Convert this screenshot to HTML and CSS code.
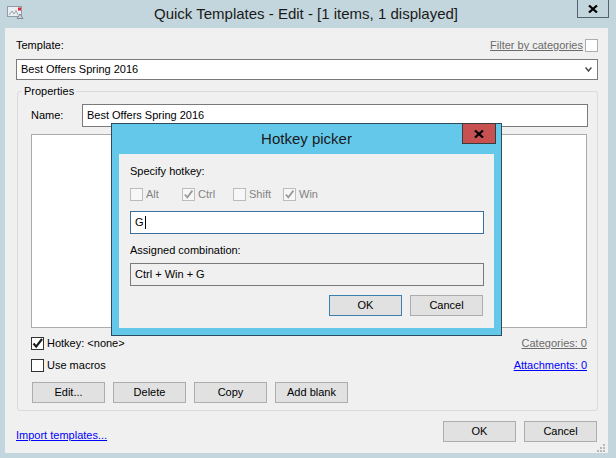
FILE: index.html
```html
<!DOCTYPE html>
<html>
<head>
<meta charset="utf-8">
<title>Quick Templates - Edit</title>
<link rel="stylesheet" href="styles.css">
</head>
<body>
<div class="window">
  <div class="titlebar">
    <svg class="appicon" width="17" height="13" viewBox="0 0 17 13">
      <rect x="0.5" y="0.5" width="14" height="10" fill="#e9eef1" stroke="#8f9ca6"/>
      <rect x="11" y="1.5" width="3" height="3" fill="#e3202b"/>
      <path d="M2 9 L5 5 L7 8 L9 4.5 L11 9" fill="none" stroke="#9aa5ad"/>
      <path d="M10 12.5 L13 8 L16 12.5 Z" fill="#cdd4d9" stroke="#7f8a92"/>
    </svg>
    <div class="title">Quick Templates - Edit - [1 items, 1 displayed]</div>
    <div class="closebtn">
      <svg width="10" height="8" viewBox="0 0 10 8"><path d="M1 0.5 L9 7.5 M9 0.5 L1 7.5" stroke="#000" stroke-width="2.2"/></svg>
    </div>
  </div>

  <div class="client">
    <div class="row-top">
      <span>Template:</span>
      <span class="filter"><span class="link-gray">Filter by categories</span><span class="cb cb-light"></span></span>
    </div>
    <div class="combo">
      <span>Best Offers Spring 2016</span>
      <svg width="7" height="5" viewBox="0 0 7 5"><path d="M0.6 0.6 L3.5 4 L6.4 0.6" fill="none" stroke="#4a4a4a" stroke-width="1.5"/></svg>
    </div>

    <div class="group">
      <span class="legend">Properties</span>
      <div class="name-row">
        <span class="name-label">Name:</span>
        <div class="textbox">Best Offers Spring 2016</div>
      </div>
      <div class="memo"></div>
      <div class="opt-row">
        <span class="check"><span class="cb"><svg width="11" height="11" viewBox="0 0 11 11"><path d="M1.5 5.5 L4.2 8.6 L10 1" fill="none" stroke="#1a1a1a" stroke-width="2.2"/></svg></span>Hotkey: &lt;none&gt;</span>
        <span class="link-gray">Categories: 0</span>
      </div>
      <div class="opt-row">
        <span class="check"><span class="cb"></span>Use macros</span>
        <span class="link-blue">Attachments: 0</span>
      </div>
      <div class="btn-row">
        <span class="btn">Edit...</span>
        <span class="btn">Delete</span>
        <span class="btn">Copy</span>
        <span class="btn">Add blank</span>
      </div>
    </div>

    <div class="bottom-row">
      <span class="link-blue">Import templates...</span>
      <div class="btn-pair">
        <span class="btn">OK</span>
        <span class="btn">Cancel</span>
      </div>
    </div>

    <svg class="gripper" width="9" height="9" viewBox="0 0 9 9">
      <rect x="7" y="1" width="2" height="2" fill="#b8b8b8"/>
      <rect x="4" y="4" width="2" height="2" fill="#b8b8b8"/>
      <rect x="7" y="4" width="2" height="2" fill="#b8b8b8"/>
      <rect x="1" y="7" width="2" height="2" fill="#b8b8b8"/>
      <rect x="4" y="7" width="2" height="2" fill="#b8b8b8"/>
      <rect x="7" y="7" width="2" height="2" fill="#b8b8b8"/>
    </svg>
  </div>

  <div class="picker">
    <div class="p-titlebar">
      <span></span>
      <div class="p-title">Hotkey picker</div>
      <div class="p-close">
        <svg width="10" height="8" viewBox="0 0 10 8"><path d="M1 0.5 L9 7.5 M9 0.5 L1 7.5" stroke="#000" stroke-width="2.2"/></svg>
      </div>
    </div>
    <div class="p-client">
      <div class="p-line">Specify hotkey:</div>
      <div class="p-checks">
        <span class="check dis"><span class="cb"></span>Alt</span>
        <span class="check dis"><span class="cb"><svg width="11" height="11" viewBox="0 0 11 11"><path d="M1.8 5.5 L4.3 8.4 L9.4 1.6" fill="none" stroke="#9a9a9a" stroke-width="1.8"/></svg></span>Ctrl</span>
        <span class="check dis"><span class="cb"></span>Shift</span>
        <span class="check dis"><span class="cb"><svg width="11" height="11" viewBox="0 0 11 11"><path d="M1.8 5.5 L4.3 8.4 L9.4 1.6" fill="none" stroke="#9a9a9a" stroke-width="1.8"/></svg></span>Win</span>
      </div>
      <div class="p-input">G<span class="caret"></span></div>
      <div class="p-line p-gap">Assigned combination:</div>
      <div class="p-readonly">Ctrl + Win + G</div>
      <div class="p-buttons">
        <span class="btn btn-default">OK</span>
        <span class="btn">Cancel</span>
      </div>
    </div>
  </div>
</div>
</body>
</html>
```
FILE: styles.css
```css
* { box-sizing: border-box; }
html, body { margin: 0; padding: 0; }
body {
  width: 616px;
  height: 458px;
  overflow: hidden;
  font-family: "Liberation Sans", Arial, sans-serif;
  font-size: 11px;
  line-height: 13px;
  color: #000;
}
.window {
  position: relative;
  width: 616px;
  height: 458px;
  background: #c3d6dd;
}

/* main title bar */
.titlebar {
  height: 28px;
  display: grid;
  grid-template-columns: 1fr auto 1fr;
  align-items: start;
}
.appicon { margin: 6px 0 0 7px; }
.title {
  font-size: 15px;
  line-height: 18px;
  padding-top: 5px;
  padding-right: 4px;
  color: #1a1a1a;
  white-space: nowrap;
}
.closebtn {
  justify-self: end;
  width: 32px;
  height: 18px;
  margin-right: 7px;
  border: 1px solid #56626b;
  border-top: none;
  display: flex;
  align-items: center;
  justify-content: center;
  padding-top: 1px;
}

/* main client area */
.client {
  position: relative;
  margin-left: 5px;
  width: 603px;
  height: 425px;
  background: #f0f0f0;
  padding: 11px 10px 0 11px;
  display: flex;
  flex-direction: column;
}
.row-top {
  height: 13px;
  display: flex;
  justify-content: space-between;
  align-items: center;
}
.filter { display: flex; align-items: center; gap: 2px; }
.link-gray { color: #6b6b6b; text-decoration: underline; }
.link-blue { color: #0000ff; text-decoration: underline; }

.cb {
  flex: none;
  width: 13px;
  height: 13px;
  border: 1px solid #333;
  background: #fff;
  display: inline-flex;
  align-items: center;
  justify-content: center;
}
.cb-light { border-color: #adadad; }

.combo {
  margin-top: 7px;
  height: 21px;
  border: 1px solid #7a7a7a;
  background: #fff;
  display: flex;
  align-items: center;
  justify-content: space-between;
  padding: 0 5px 0 4px;
}

/* group box */
.group {
  position: relative;
  margin: 11px 0 0 1px;
  border: 1px solid #dadada;
  border-radius: 3px;
  padding: 12px 9px 7px 13px;
}
.legend {
  position: absolute;
  top: -7px;
  left: 4px;
  padding: 0 2px;
  background: #f0f0f0;
}
.name-row { display: flex; height: 23px; align-items: center; }
.name-label { width: 51px; flex: none; }
.textbox {
  flex: 1;
  height: 23px;
  border: 1px solid #7a7a7a;
  background: #fff;
  padding: 0 4px;
  display: flex;
  align-items: center;
}
.memo {
  margin: 7px 1px 0 0;
  height: 194px;
  border: 1px solid #ababab;
  background: #fff;
}
.opt-row {
  margin: 9px 1px 0 0;
  height: 13px;
  display: flex;
  justify-content: space-between;
  align-items: center;
}
.check { display: inline-flex; align-items: center; gap: 3px; }
.btn-row {
  margin: 10px 0 0 1px;
  display: flex;
  gap: 8px;
}
.btn {
  width: 73px;
  height: 21px;
  border: 1px solid #adadad;
  background: #e1e1e1;
  display: flex;
  align-items: center;
  justify-content: center;
}

.bottom-row {
  margin: 10px 1px 0 0;
  display: flex;
  justify-content: space-between;
  align-items: flex-end;
}
.btn-pair { display: flex; gap: 8px; }

.gripper { position: absolute; right: 3px; bottom: 1px; }

/* hotkey picker dialog */
.picker {
  position: absolute;
  left: 111px;
  top: 123px;
  width: 391px;
  height: 213px;
  border: 1px solid #2e4a5d;
  background: #64c8ea;
  padding: 0 7px 7px 7px;
  display: flex;
  flex-direction: column;
}
.p-titlebar {
  height: 30px;
  margin: 0 -7px;
  display: grid;
  grid-template-columns: 1fr auto 1fr;
  align-items: start;
}
.p-title {
  font-size: 15px;
  line-height: 18px;
  padding-top: 6px;
  color: #1a1a1a;
}
.p-close {
  justify-self: end;
  margin-top: -1px;
  margin-right: 5px;
  width: 34px;
  height: 21px;
  border: 1px solid #3b3b3b;
  background: #c75050;
  display: flex;
  align-items: center;
  justify-content: center;
}
.p-client {
  flex: 1;
  background: #f0f0f0;
  padding: 11px 10px 0 11px;
  display: flex;
  flex-direction: column;
}
.p-line { height: 13px; }
.p-gap { margin-top: 10px; }
.p-checks {
  margin-top: 10px;
  height: 13px;
  display: grid;
  grid-template-columns: 52px 51px 50px auto;
  align-items: center;
}
.dis { color: #838383; }
.dis .cb { border-color: #bcbcbc; background: #f7f7f7; }
.p-input {
  margin-top: 10px;
  height: 23px;
  border: 1px solid #3b6f9e;
  background: #fff;
  padding: 0 4px;
  display: flex;
  align-items: center;
}
.caret {
  display: inline-block;
  width: 1px;
  height: 13px;
  background: #000;
  margin-left: 1px;
}
.p-readonly {
  margin-top: 6px;
  height: 23px;
  border: 1px solid #7a7a7a;
  background: #f0f0f0;
  padding: 0 4px;
  display: flex;
  align-items: center;
}
.p-buttons {
  margin: 9px 1px 0 0;
  display: flex;
  justify-content: flex-end;
  gap: 8px;
}
.btn-default { border-color: #3c7fb1; }
```
